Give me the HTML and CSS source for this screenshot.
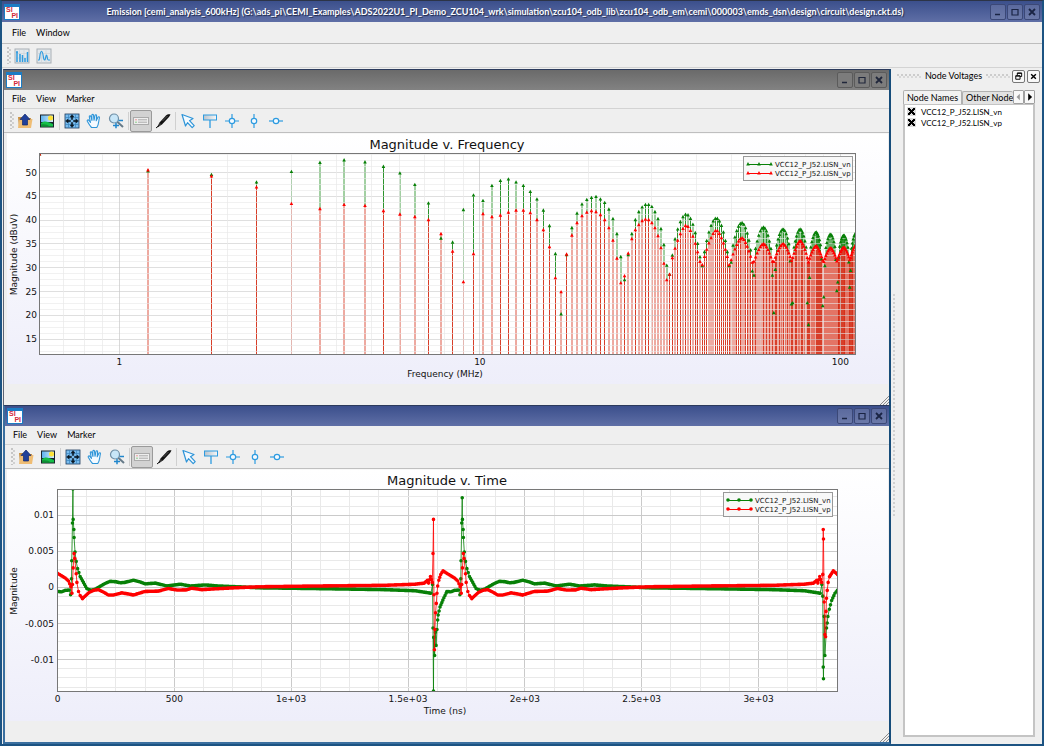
FILE: index.html
```html
<!DOCTYPE html>
<html lang="en">
<head>
<meta charset="utf-8">
<title>Emission [cemi_analysis_600kHz]</title>
<link rel="stylesheet" href="styles.css">
</head>
<body>
<svg class="defs" aria-hidden="true">
  <defs>
    <linearGradient id="g-plate" x1="0" y1="0" x2="1" y2="0"><stop offset="0" stop-color="#b9c3cc"/><stop offset="1" stop-color="#f7f7f7"/></linearGradient>
    <linearGradient id="g-sky" x1="0" y1="0" x2="1" y2="0"><stop offset="0" stop-color="#5fb2ee"/><stop offset="1" stop-color="#d8eefb"/></linearGradient>
  </defs>
  <symbol id="i-spectrum" viewBox="0 0 16 16">
    <rect x="1" y="1" width="14" height="14" fill="#e3e8ec" stroke="#a9b0b6"/>
    <path d="M1 5.500h14M1 10h14M5.500 1v14M10 1v14" stroke="#c9d0d6" stroke-width=".6"/>
    <path d="M2 4h2M3 4v10M6 6v8M8.500 7v7M11 10v4M13.500 4v10" stroke="#2d9be0" stroke-width="1.500" fill="none"/>
  </symbol>
  <symbol id="i-wave" viewBox="0 0 16 16">
    <rect x="1" y="1" width="14" height="14" fill="#e3e8ec" stroke="#a9b0b6"/>
    <path d="M1 5.500h14M1 10h14M5.500 1v14M10 1v14" stroke="#c9d0d6" stroke-width=".6"/>
    <path d="M2 12h1C4 12 3.500 3.500 5.500 3.500S7 12 8.500 12 9.500 7 10.500 7s.5 5 1.800 5H14" stroke="#2d9be0" stroke-width="1.200" fill="none"/>
  </symbol>
  <symbol id="i-open" viewBox="0 0 16 16">
    <path d="M1 4h4l1 1h8v10H2z" fill="#c9903f"/><path d="M1 15 2.500 6h13L14 15z" fill="#efbd74"/>
    <path d="M8 1 13 6.500h-2.500V12h-5V6.500H3z" fill="#20409a" stroke="#122a6e" stroke-width=".7"/>
  </symbol>
  <symbol id="i-image" viewBox="0 0 16 16">
    <rect x="1" y="1.500" width="14" height="13" fill="#19232b"/><rect x="2" y="2.500" width="12" height="6.500" fill="url(#g-sky)"/>
    <circle cx="11.500" cy="5" r="2.500" fill="#ffe338"/><path d="M2 10c3-2.500 6-2 12 1v2.500H2z" fill="#15bf48"/><path d="M2 11.500c4-.500 6 0 9 2H2z" fill="#0e8f34"/>
  </symbol>
  <symbol id="i-fit" viewBox="0 0 16 16">
    <rect x="1" y="1" width="14" height="14" fill="#79bdf0" stroke="#1d3a5c" stroke-width=".8"/>
    <path d="M1 4.500h14M1 11.500h14M4.500 1v14M11.500 1v14" stroke="#3b82ba" stroke-width=".7"/>
    <path d="M8 1.500 10 4H8.700v2.500H7.300V4H6zM8 14.500 6 12H7.300V9.500h1.400V12H10zM1.500 8 4 6v1.300h2.500v1.400H4V10zM14.500 8 12 10V8.700H9.500V7.300H12V6z" fill="#0b1722" stroke="#0b1722" stroke-width=".4"/>
  </symbol>
  <symbol id="i-hand" viewBox="0 0 16 16">
    <path d="M5.500 14.500C3.500 12.500 2.500 10.500 1.300 8.300c-.500-1.300.900-1.800 1.600-.900L4.500 9.300 3.300 4c-.200-1.300 1.300-1.500 1.600-.300L6 7.500 5.800 2.300c0-1.300 1.600-1.300 1.700 0L8 7.300l1-4.800c.300-1.200 1.800-.900 1.600.300L10.200 7.800l1.700-3.500c.600-1.100 1.900-.500 1.500.600C12.500 8 13 11.500 10.800 14.500z" fill="#f4faff" stroke="#2d94d8" stroke-width="1.100" stroke-linejoin="round"/>
  </symbol>
  <symbol id="i-zoom" viewBox="0 0 16 16">
    <path d="m9 8.500 6 5.500" stroke="#667a88" stroke-width="2"/><circle cx="6" cy="5.500" r="4.500" fill="#c8e6f8" stroke="#6f8fa6" stroke-width="1.200"/>
    <path d="M10.500 7.500H15M5 12.500h6M8 9.800v5.500" stroke="#2186cc" stroke-width="1.500"/>
  </symbol>
  <symbol id="i-legend" viewBox="0 0 16 16">
    <rect x=".5" y="4.500" width="15" height="7" fill="#eee" stroke="#aaa"/><path d="M5 6.800h9M5 9.200h9" stroke="#aaa"/><path d="M2 6.800h2" stroke="#e99"/><path d="M2 9.200h2" stroke="#8c8"/>
  </symbol>
  <symbol id="i-pen" viewBox="0 0 16 16">
    <path d="M4.500 9.500 11 2.500c1-1 3-1.500 4.500-1L14 4l-7 7.500-2 1z" fill="#111"/><path d="m4.500 9.500 2 2L3.500 14 2 14.300z" fill="#333"/><path d="m1 15 3-2.500" stroke="#111"/><path d="m7.500 8 5-5" stroke="#999" stroke-width=".5"/>
  </symbol>
  <symbol id="i-cursor" viewBox="0 0 16 16">
    <path d="m2 1.500 11 4-3.500 2.200 4.700 5-2 2-4.700-5L5.500 13z" fill="#f4faff" stroke="#2d94d8" stroke-width="1.200" stroke-linejoin="round"/>
  </symbol>
  <symbol id="i-flag" viewBox="0 0 16 16">
    <path d="M8 7v8" stroke="#2d9be0" stroke-width="1.300"/><rect x="1.500" y="2" width="13" height="5" fill="url(#g-plate)" stroke="#2d9be0"/>
  </symbol>
  <symbol id="i-cross" viewBox="0 0 16 16">
    <path d="M1 8h14M8 1v14" stroke="#2d9be0" stroke-width="1.200"/><circle cx="8" cy="8" r="2.700" fill="#f4faff" stroke="#2d9be0" stroke-width="1.200"/>
  </symbol>
  <symbol id="i-vert" viewBox="0 0 16 16">
    <path d="M8 1v14" stroke="#2d9be0" stroke-width="1.200"/><circle cx="8" cy="8" r="2.700" fill="#f4faff" stroke="#2d9be0" stroke-width="1.200"/>
  </symbol>
  <symbol id="i-horz" viewBox="0 0 16 16">
    <path d="M1 8h14" stroke="#2d9be0" stroke-width="1.200"/><circle cx="8" cy="8" r="2.700" fill="#f4faff" stroke="#2d9be0" stroke-width="1.200"/>
  </symbol>
  <symbol id="i-min" viewBox="0 0 14 14"><path d="M4 9.500h5" stroke="currentColor" stroke-width="1.500"/></symbol>
  <symbol id="i-max" viewBox="0 0 14 14"><path d="M4 4.500h6v5.500H4z" fill="none" stroke="currentColor" stroke-width="1.200"/></symbol>
  <symbol id="i-close" viewBox="0 0 14 14"><path d="m4 4 6 6m0-6-6 6" stroke="currentColor" stroke-width="1.800"/></symbol>
  <symbol id="i-float" viewBox="0 0 14 14"><path d="M5.500 5.500v-3H11V7H9M3.500 6H9v4.500H3.500zM3.500 6.500H9M5.500 3H11" fill="none" stroke="currentColor" stroke-width="1.200"/></symbol>
  <symbol id="i-prev" viewBox="0 0 14 14"><path d="M9 2v10L4 7z" fill="currentColor"/></symbol>
  <symbol id="i-next" viewBox="0 0 14 14"><path d="M5 1v12l6-6z" fill="currentColor"/></symbol>
</svg>

<div class="app">
  <header class="titlebar">
    <span class="logo"><b>SI</b><b>PI</b></span>
    <h1 class="caption">Emission [cemi_analysis_600kHz] (G:\ads_pi\CEMI_Examples\ADS2022U1_PI_Demo_ZCU104_wrk\simulation\zcu104_odb_lib\zcu104_odb_em\cemi\000003\emds_dsn\design\circuit\design.ckt.ds)</h1>
    <div class="winbtns">
      <button aria-label="Minimize"><svg><use href="#i-min"/></svg></button>
      <button aria-label="Maximize"><svg><use href="#i-max"/></svg></button>
      <button aria-label="Close"><svg><use href="#i-close"/></svg></button>
    </div>
  </header>
  <nav class="menubar main-menu"><button>File</button><button>Window</button></nav>
  <div class="toolbar main-tools">
    <i class="grip"></i>
    <button class="tool" aria-label="Spectrum plot"><svg class="icon"><use href="#i-spectrum"/></svg></button>
    <button class="tool" aria-label="Waveform plot"><svg class="icon"><use href="#i-wave"/></svg></button>
  </div>

  <div class="workspace">
    <main class="mdi">
      <section class="window inactive">
        <div class="titlebar">
          <span class="logo"><b>SI</b><b>PI</b></span><span class="caption"></span>
          <div class="winbtns">
            <button aria-label="Minimize"><svg><use href="#i-min"/></svg></button>
            <button aria-label="Maximize"><svg><use href="#i-max"/></svg></button>
            <button aria-label="Close"><svg><use href="#i-close"/></svg></button>
          </div>
        </div>
        <nav class="menubar"><button>File</button><button>View</button><button>Marker</button></nav>
        <div class="toolbar">
          <i class="grip"></i>
          <button class="tool" aria-label="Export"><svg class="icon"><use href="#i-open"/></svg></button>
          <button class="tool" aria-label="Save image"><svg class="icon"><use href="#i-image"/></svg></button>
          <i class="sep"></i>
          <button class="tool" aria-label="Fit"><svg class="icon"><use href="#i-fit"/></svg></button>
          <button class="tool" aria-label="Pan"><svg class="icon"><use href="#i-hand"/></svg></button>
          <button class="tool" aria-label="Zoom"><svg class="icon"><use href="#i-zoom"/></svg></button>
          <i class="sep"></i>
          <button class="tool pressed" aria-label="Legend" aria-pressed="true"><svg class="icon"><use href="#i-legend"/></svg></button>
          <button class="tool" aria-label="Trace style"><svg class="icon"><use href="#i-pen"/></svg></button>
          <i class="sep"></i>
          <button class="tool" aria-label="Select"><svg class="icon"><use href="#i-cursor"/></svg></button>
          <button class="tool" aria-label="Marker"><svg class="icon"><use href="#i-flag"/></svg></button>
          <button class="tool" aria-label="Cross marker"><svg class="icon"><use href="#i-cross"/></svg></button>
          <button class="tool" aria-label="Vertical marker"><svg class="icon"><use href="#i-vert"/></svg></button>
          <button class="tool" aria-label="Horizontal marker"><svg class="icon"><use href="#i-horz"/></svg></button>
        </div>
        <div class="chart" id="spectrum"></div>
        <div class="statusbar"><svg class="sizer" viewBox="0 0 10 10"><path d="M1 10 10 1M4 10l6-6M7 10l3-3"/></svg></div>
      </section>

      <section class="window active">
        <div class="titlebar">
          <span class="logo"><b>SI</b><b>PI</b></span><span class="caption"></span>
          <div class="winbtns">
            <button aria-label="Minimize"><svg><use href="#i-min"/></svg></button>
            <button aria-label="Maximize"><svg><use href="#i-max"/></svg></button>
            <button aria-label="Close"><svg><use href="#i-close"/></svg></button>
          </div>
        </div>
        <nav class="menubar"><button>File</button><button>View</button><button>Marker</button></nav>
        <div class="toolbar">
          <i class="grip"></i>
          <button class="tool" aria-label="Export"><svg class="icon"><use href="#i-open"/></svg></button>
          <button class="tool" aria-label="Save image"><svg class="icon"><use href="#i-image"/></svg></button>
          <i class="sep"></i>
          <button class="tool" aria-label="Fit"><svg class="icon"><use href="#i-fit"/></svg></button>
          <button class="tool" aria-label="Pan"><svg class="icon"><use href="#i-hand"/></svg></button>
          <button class="tool" aria-label="Zoom"><svg class="icon"><use href="#i-zoom"/></svg></button>
          <i class="sep"></i>
          <button class="tool pressed" aria-label="Legend" aria-pressed="true"><svg class="icon"><use href="#i-legend"/></svg></button>
          <button class="tool" aria-label="Trace style"><svg class="icon"><use href="#i-pen"/></svg></button>
          <i class="sep"></i>
          <button class="tool" aria-label="Select"><svg class="icon"><use href="#i-cursor"/></svg></button>
          <button class="tool" aria-label="Marker"><svg class="icon"><use href="#i-flag"/></svg></button>
          <button class="tool" aria-label="Cross marker"><svg class="icon"><use href="#i-cross"/></svg></button>
          <button class="tool" aria-label="Vertical marker"><svg class="icon"><use href="#i-vert"/></svg></button>
          <button class="tool" aria-label="Horizontal marker"><svg class="icon"><use href="#i-horz"/></svg></button>
        </div>
        <div class="chart" id="waveform"></div>
        <div class="statusbar"><svg class="sizer" viewBox="0 0 10 10"><path d="M1 10 10 1M4 10l6-6M7 10l3-3"/></svg></div>
      </section>
    </main>

    <div class="splitter"><i></i></div>

    <aside class="dock">
      <div class="dock-head">
        <i class="dots"></i><h2>Node Voltages</h2><i class="dots"></i>
        <button class="mini" aria-label="Float"><svg><use href="#i-float"/></svg></button>
        <button class="mini" aria-label="Close"><svg><use href="#i-close"/></svg></button>
      </div>
      <div class="tabs" role="tablist">
        <button class="tab selected" role="tab" aria-selected="true">Node Names</button>
        <button class="tab" role="tab" aria-selected="false">Other Node</button>
        <button class="scroll" aria-label="Previous tab" disabled><svg><use href="#i-prev"/></svg></button>
        <button class="scroll" aria-label="Next tab"><svg><use href="#i-next"/></svg></button>
      </div>
      <div class="nodes">
        <label><input type="checkbox" checked>VCC12_P_J52.LISN_vn</label>
        <label><input type="checkbox" checked>VCC12_P_J52.LISN_vp</label>
      </div>
    </aside>
  </div>
</div>
<script src="charts.js"></script>
</body>
</html>
```
FILE: styles.css
```css
* { box-sizing: border-box; }
html, body { height: 100%; }
body {
  margin: 0;
  background: #efefef;
  color: #000;
  font: 9px/12px Lato, "Open Sans", sans-serif;
}
button { font: inherit; color: inherit; background: none; border: 0; padding: 0; margin: 0; }
h1, h2 { margin: 0; font: inherit; }
.defs { position: absolute; width: 0; height: 0; }
.icon { display: block; flex: none; width: 16px; height: 16px; }

.logo {
  display: flex;
  flex-direction: column;
  flex: none;
  width: 16px;
  height: 16px;
  padding: 0 1px;
  border: 1px solid #1b7cc4;
  border-top-width: 3px;
  background: #fff;
  color: #d2283c;
  font: bold 7px/6px "Liberation Sans", sans-serif;
}
.logo b:last-child { align-self: flex-end; }

.app {
  display: flex;
  flex-direction: column;
  height: 100vh;
  border: 1px solid #1c5382;
  border-width: 1px 2px 2px;
  border-top-color: #2c3447;
}

.titlebar {
  display: flex;
  align-items: center;
  flex: none;
  height: 21px;
  padding: 0 2px;
  background: linear-gradient(#3b4f8c, #5f6fa6);
}
.caption {
  flex: 1;
  min-width: 0;
  overflow: hidden;
  white-space: nowrap;
  text-align: center;
  color: #fff;
  font-weight: bold;
  text-shadow: 1px 1px 1px #1d2747;
}
.winbtns { display: flex; gap: 1px; }
.winbtns button {
  width: 16px;
  height: 16px;
  border: 1px solid #3b4877;
  border-radius: 2px;
  background: linear-gradient(#5b6a9e, #6b79a9);
  color: #1a2444;
}
.winbtns svg, .mini svg, .scroll svg { display: block; width: 100%; height: 100%; }

.menubar {
  display: flex;
  align-items: center;
  flex: none;
  gap: 10px;
  height: 19px;
  padding: 0 8px;
  border-bottom: 1px solid #d3d3d3;
}
.main-menu { height: 22px; padding: 0 10px; border-color: #bdbdbd; }
.toolbar {
  display: flex;
  align-items: center;
  flex: none;
  height: 24px;
  padding-left: 6px;
  border-bottom: 1px solid #bfbfbf;
}
.main-tools { padding-left: 5px; border-color: #d3d3d3; }
.grip {
  width: 4px;
  height: 17px;
  background: radial-gradient(circle at 1px 1px, #c5c5c5 1px, transparent 1px) 0 0 / 4px 4px,
    radial-gradient(circle at 1px 1px, #d0d0d0 1px, transparent 1px) 2px 2px / 4px 4px;
}
.tool { display: grid; place-items: center; width: 22px; height: 22px; }
.tool.pressed { border: 1px solid #9a9a9a; border-radius: 2px; background: #d2d2d2; }
.sep { width: 1px; height: 18px; margin: 0 1px; background: #d0d0d0; }

.workspace { display: flex; flex: 1; min-height: 0; }
.mdi { display: flex; flex-direction: column; flex: 1; min-width: 0; padding: 1px 0 0 1px; }
.window {
  display: flex;
  flex-direction: column;
  flex: 1 1 2px;
  min-height: 0;
  border: 1px solid #2b3a5c;
  border-right: 2px solid #164c7a;
  border-bottom: 0;
  border-left-color: #5c6474;
}
.window.active { flex-basis: 5px; border-left: 2px solid #3a6f9f; border-bottom: 2px solid #3a6f9f; }
.inactive > .titlebar { background: linear-gradient(#6a6a6a, #828282); }
.inactive .winbtns button { border-color: #5b5b5b; background: #7c7c7c; color: #20273b; }
.window > .titlebar { height: 20px; }
.chart {
  flex: 1;
  min-height: 0;
  margin: 0 1px 0 3px;
  border-top: 1px solid #f8f8f8;
  background: linear-gradient(#fff, #eeeefa);
}
.active .chart { margin-left: 2px; }
.chart svg { display: block; }
.statusbar { display: flex; justify-content: flex-end; align-items: flex-end; flex: none; height: 21px; }
.sizer { width: 10px; height: 10px; fill: none; stroke: #8b8b8b; }

.chart text { font-family: "DejaVu Sans", sans-serif; font-size: 9px; fill: #111; }
.chart .chart-title { font-size: 13px; }
.chart .legend-text { font-size: 7px; }
.plot-bg { fill: #fff; }
.frame { fill: none; stroke: #777; }
.minor { stroke: #e9e9e9; fill: none; }
.major { stroke: #cacaca; fill: none; }
.legend-box { fill: #f8f8f8; stroke: #999; }
.vn { stroke: #078007; fill: none; }
.vp { stroke: #f00; fill: none; }
.stem.vp { stroke: #d01c04; }
.vn-mark { fill: #078007; }
.vp-mark { fill: #f00; }

.splitter { display: flex; align-items: center; flex: none; width: 6px; padding-left: 2px; }
.splitter i {
  width: 2px;
  height: 224px;
  background: repeating-linear-gradient(#d0d0d0 0 2px, transparent 2px 4px);
}
.dock { display: flex; flex-direction: column; flex: none; width: 145px; }
.dock-head { display: flex; align-items: center; flex: none; gap: 2px; height: 16px; padding-right: 2px; }
.dots {
  flex: 1;
  height: 4px;
  background: radial-gradient(circle at 1px 1px, #ccc 1px, transparent 1px) 0 0 / 4px 4px,
    radial-gradient(circle at 1px 1px, #d8d8d8 1px, transparent 1px) 2px 2px / 4px 4px;
}
.dock-head h2 { padding: 0 2px; }
.mini { width: 13px; height: 13px; border: 1px solid #777; border-radius: 2px; background: #f8f8f8; }
.tabs { display: flex; align-items: flex-end; flex: none; height: 20px; margin: 0 7px 0 6px; }
.tab {
  flex: none;
  height: 14px;
  width: 59px;
  border: 1px solid #b0b0b0;
  border-bottom: 0;
  border-radius: 2px 2px 0 0;
  background: #e2e2e2;
  white-space: nowrap;
  overflow: hidden;
}
.tab:not(.selected) { flex: 1; height: 13px; width: auto; min-width: 0; padding-left: 3px; border-right: 0; }
.tab.selected { background: #f2f2f2; }
.scroll { width: 11px; height: 14px; border: 1px solid #a0a0a0; border-radius: 1px; background: #f8f8f8; }
.scroll:disabled { color: #999; }
.nodes {
  flex: 1;
  margin: 0 7px 7px 6px;
  padding: 1px 2px;
  border: 2px solid #c4c4c4;
  border-top-width: 1px;
  background: #fff;
}
.nodes label { display: flex; align-items: center; gap: 5px; height: 11px; font-size: 8px; }
.nodes input {
  appearance: none;
  width: 9px;
  height: 9px;
  margin: 0;
  border: 1px solid #ddd;
  background: #ddd;
}
.nodes input:checked {
  background: linear-gradient(45deg, transparent 38%, #000 38% 62%, transparent 62%),
    linear-gradient(-45deg, #ddd 38%, #000 38% 62%, #ddd 62%);
}
```
FILE: charts.js
```js
const NS = 'http://www.w3.org/2000/svg';

function add(parent, name, attrs, text) {
  const node = document.createElementNS(NS, name);
  for (const key in attrs) node.setAttribute(key, attrs[key]);
  if (text !== undefined) node.textContent = text;
  parent.appendChild(node);
  return node;
}

/* Spectrum: harmonics of 600 kHz, levels in dBuV, [vn, vp]. */
const F0 = 0.6;
const level = y => 50 - (y - 172.5) / 4.75;
const firstHarmonics = [
  [154, 154], [171, 170], [174.5, 176], [182, 187], [171.5, 203.5], [162.5, 208.5], [160, 204.5], [162, 205.5],
  [166.5, 210.5], [173, 214], [184.5, 216.5], [203, 219.5], [238, 233.5], [242, 251], [209.5, 281.5],
  [195, 253.5], [200.5, 213.5], [185.5, 216.5], [180.5, 215], [179, 212], [182, 210], [185.5, 210],
  [191.5, 212.5], [199, 219.5], [210, 229.5], [225.5, 246.5], [253.5, 277.5], [313.5, 291.5], [254.5, 254],
  [227.5, 235], [213, 222.5], [204, 215.5], [199.5, 212], [197.5, 210.5], [196.5, 211.5], [199, 214.5],
  [202.5, 219.5], [209, 227.5], [218.5, 240], [233.5, 258], [256.5, 282.5], [279.5, 275.5], [254.5, 253],
  [233.5, 238.5], [219.5, 229.5], [211.5, 224.5], [207, 220.5], [204.5, 219], [204.5, 219.5], [206.5, 222.5],
  [211.5, 227.5], [218.5, 235.5], [228.5, 247.5], [244.5, 263], [265, 279.5], [274, 274], [255, 257.5]
];
/* Later lobes: peak harmonic, vn peak, vp peak, vp trough, vn null depth. */
const lobes = [
  [62.3, 214, 225, 273, 274], [75.5, 218, 230, 267, 270], [88.8, 222.5, 237.5, 266, 284],
  [102, 227, 243.5, 265, 299], [115.6, 229, 243.5, 262, 321], [129, 229, 240.5, 261, 352],
  [142.7, 232, 245.5, 262, 329], [156.6, 234, 247.5, 262, 303], [170.4, 235, 247, 260, 292], [184, 233, 245, 260, 290]
];
function spectrumData() {
  const out = firstHarmonics.map(([a, b], i) => [F0 * (i + 1), level(a), level(b)]);
  for (let k = 58; k <= 183; k++) {
    const lobe = lobes.reduce((best, l) => Math.abs(l[0] - k) < Math.abs(best[0] - k) ? l : best);
    const u = Math.min(1, Math.abs(lobe[0] - k) / 6.8);
    const vp = lobe[2] + (lobe[3] - lobe[2]) * Math.pow(u, 1.6);
    let vn = lobe[1] + (lobe[3] - lobe[1]) * Math.pow(u, 1.9);
    if (u > 0.75) vn += (lobe[4] - lobe[3]) * (u - 0.75) / 0.25;
    out.push([F0 * k, level(vn), level(vp)]);
  }
  return out;
}

/* Waveform: one switching cycle, [ns, mV]. */
const vnCycle = [
  [0, -.55], [18, -.6], [33, -.4], [50, -.35], [56, -1], [60, 1.2], [61, 3.7], [64, 8.9], [66, 13.6], [67, 9.4],
  [70, 8], [71, 6.9], [75, 4.9], [80, 3.6], [86, 2.6], [97, 1.5], [111, .7], [125, -.15], [143, -.4], [161, -.25],
  [182, .15], [204, .55], [225, .85], [247, .8], [268, .65], [289, .7], [325, 1], [354, .75], [375, .5],
  [418, .6], [468, .2], [525, .45], [568, .2], [632, .35], [689, .2], [767, .1], [867, -.05], [1100, -.15],
  [1400, -.3], [1530, -.45], [1580, -.7], [1598, -.8], [1605, .4]
];
const vpCycle = [
  [0, 1.95], [18, 1.6], [33, 1.3], [47, .9], [57, .1], [62, -.8], [64, .4], [67, 2.7], [71, 4.7], [74, 4],
  [80, 1.9], [83, .7], [90, -.55], [97, -1.1], [107, -1.55], [121, -1.1], [135, -.7], [154, -.4], [175, -.3],
  [200, -.7], [218, -1.05], [240, -1.05], [275, -.75], [304, -.9], [325, -1.05], [375, -.55], [432, -.5],
  [475, -.15], [510, -.35], [553, -.33], [575, -.1], [617, -.3], [667, -.2], [753, -.05], [867, .1],
  [1100, .2], [1400, .3], [1530, .45], [1570, .6], [1583, 1], [1588, .6], [1596, 1.5], [1604, .7]
];
const vnEvents = [
  [[1607, -5.6], [1609, -14.3], [1610, -6.9], [1614, -9.4], [1617, -6.2], [1620, -8], [1624, -5.8], [1627, -4.5], [1629, -3.8],
   [1637, -2.7], [1649, -1.75], [1663, -.8]],
  [[3275, -1.2], [3277, -11], [3278, -12.6], [3281, -4], [3284, -9.4], [3291, -5.6], [3294, -4.9], [3297, -4],
   [3303, -3], [3313, -1.8], [3327, -.8], [3338, -.4]]
];
const vpEvents = [
  [[1607, 4.7], [1609, 9.4], [1611, -1], [1613, -8.6], [1615, -5.8], [1618, -3.5], [1621, -2.2], [1624, -.8],
   [1627, .2], [1632, 1], [1640, 1.8], [1650, 2.3]],
  [[3275, 1.8], [3277, 8], [3278, 6.7], [3281, -2], [3284, -6.5], [3287, -6.8], [3289, -3.3], [3291, -1.5], [3294, -.4],
   [3298, .7], [3304, 1.5], [3320, 2.3], [3338, 1.8]]
];
function waveform(cycle, events) {
  const second = cycle.map(([t, v]) => [t + 1666, Math.min(v, 12.4)]);
  return cycle.concat(events[0], second, events[1]);
}
function samples(knots) {
  const out = [];
  knots.forEach(([t, v], i) => {
    out.push([t, v]);
    const next = knots[i + 1];
    if (!next) return;
    const slope = Math.abs((next[1] - v) / (next[0] - t));
    if (slope > 0.35) return;
    const n = Math.floor((next[0] - t) / 4);
    for (let j = 1; j < n; j++) out.push([t + (next[0] - t) * j / n, v + (next[1] - v) * j / n]);
  });
  return out;
}

function frame(host, margin, title, xLabel, yLabel) {
  host.replaceChildren();
  const w = host.clientWidth, h = host.clientHeight;
  const svg = add(host, 'svg', { width: w, height: h, role: 'img', 'aria-label': title });
  const box = { l: margin.l, t: margin.t, r: w - margin.r, b: h - margin.b };
  const cx = (box.l + box.r) / 2, cy = (box.t + box.b) / 2;
  const clip = add(add(svg, 'defs', {}), 'clipPath', { id: host.id + '-clip' });
  const area = { x: box.l, y: box.t, width: box.r - box.l, height: box.b - box.t };
  add(clip, 'rect', area);
  add(svg, 'rect', { ...area, class: 'plot-bg' });
  add(svg, 'text', { x: cx, y: 15, 'text-anchor': 'middle', class: 'chart-title' }, title);
  add(svg, 'text', { x: cx - 2, y: box.b + 23, 'text-anchor': 'middle' }, xLabel);
  add(svg, 'text', { transform: `translate(10 ${cy + 1}) rotate(-90)`, 'text-anchor': 'middle' }, yLabel);
  return { svg, box, area: { ...area, x: area.x + .5, y: area.y + .5 }, clip: `url(#${host.id}-clip)` };
}
function crisp(v) { return Math.floor(v) + 0.5; }
function gridLine(g, box, axis, pos, cls) {
  const p = crisp(pos);
  add(g, 'path', { d: axis === 'x' ? `M${p} ${box.t}V${box.b}` : `M${box.l} ${p}H${box.r}`, class: cls });
}
function triangle(x, y) { return `M${x - 1.8} ${y + 1.5}h3.6l-1.8 -3.4z`; }
function dot(x, y) { return `M${x - 1.8} ${y}a1.8 1.8 0 1 0 3.6 0a1.8 1.8 0 1 0 -3.6 0z`; }
function legend(svg, box, inset, mark) {
  const x = box.r - inset - 109, y = box.t + 3;
  add(svg, 'rect', { x: x + .5, y: y + .5, width: 109, height: 24, class: 'legend-box' });
  ['vn', 'vp'].forEach((name, i) => {
    const ly = y + 8 + i * 9;
    add(svg, 'path', { d: `M${x + 5} ${ly + .5}h23`, class: name });
    add(svg, 'path', { d: mark(x + 5, ly) + mark(x + 16, ly) + mark(x + 28, ly), class: name + '-mark' });
    add(svg, 'text', { x: x + 32, y: ly + 3, class: 'legend-text' }, 'VCC12_P_J52.LISN_' + name);
  });
}

function drawSpectrum() {
  const f = frame(document.getElementById('spectrum'), { l: 32, r: 33, t: 19, b: 30 },
    'Magnitude v. Frequency', 'Frequency (MHz)', 'Magnitude (dBuV)');
  const { svg, box } = f;
  const lo = Math.log10(0.6), hi = Math.log10(110.2);
  const X = v => box.l + .5 + (Math.log10(v) - lo) / (hi - lo) * (box.r - box.l);
  const Y = v => box.b - (v - 11.9) / (54.1 - 11.9) * (box.b - box.t);
  const data = spectrumData();
  const stems = add(svg, 'g', { 'clip-path': f.clip });
  /* A stem that straddles two pixel columns is drawn wide and faint, otherwise it fills one column. */
  const straddles = x => Math.abs(x - crisp(x)) > .25;
  const snap = x => straddles(x) ? Math.round(x) : crisp(x);
  [false, true].forEach(faint => {
    const group = data.filter(p => straddles(X(p[0])) === faint);
    const opacity = faint ? .75 : .85;
    add(stems, 'path', {
      d: group.filter(p => p[1] > p[2]).map(p => `M${snap(X(p[0]))} ${Y(p[1])}V${Y(p[2])}`).join(''),
      class: 'stem vn', opacity
    });
    add(stems, 'path', {
      d: group.map(p => `M${snap(X(p[0]))} ${Y(p[2])}V${box.b}`).join(''), class: 'stem vp', opacity
    });
  });
  const grid = add(svg, 'g', { opacity: .6 });
  for (let v = 12.5; v < 54; v += 1.25) gridLine(grid, box, 'y', Y(v), v % 5 ? 'minor' : 'major');
  const vgrid = add(svg, 'g', { opacity: .7 });
  [.7, .8, .9, 1, 2, 3, 4, 5, 6, 7, 8, 9, 10, 20, 30, 40, 50, 60, 70, 80, 90, 100].forEach(v =>
    gridLine(vgrid, box, 'x', X(v), v === 1 || v === 10 || v === 100 ? 'major' : 'minor'));
  for (let v = 15; v <= 50; v += 5) add(svg, 'text', { x: box.l - 2, y: Y(v) + 3, 'text-anchor': 'end' }, v);
  [1, 10, 100].forEach(v => add(svg, 'text', { x: X(v), y: box.b + 11, 'text-anchor': 'middle' }, v));
  const marks = add(svg, 'g', { 'clip-path': f.clip });
  add(marks, 'path', { d: data.map(p => triangle(X(p[0]), Y(p[1]))).join(''), class: 'vn-mark' });
  add(marks, 'path', { d: data.map(p => triangle(X(p[0]), Y(p[2]))).join(''), class: 'vp-mark' });
  add(svg, 'rect', { ...f.area, class: 'frame' });
  legend(svg, box, 3, triangle);
}

function drawWaveform() {
  const f = frame(document.getElementById('waveform'), { l: 50, r: 51, t: 19, b: 30 },
    'Magnitude v. Time', 'Time (ns)', 'Magnitude');
  const { svg, box } = f;
  const X = v => box.l + .5 + v / 3338 * (box.r - box.l);
  const Y = v => box.b - (v + 14.3) / 27.9 * (box.b - box.t);
  for (let v = 125; v < 3330; v += 125) gridLine(svg, box, 'x', X(v), v % 500 ? 'minor' : 'major');
  for (let v = -13.75; v < 13.6; v += 1.25) gridLine(svg, box, 'y', Y(v), v % 5 ? 'minor' : 'major');
  [[-10, '-0.01'], [-5, '-0.005'], [0, '0'], [5, '0.005'], [10, '0.01']].forEach(([v, label]) =>
    add(svg, 'text', { x: box.l - 3, y: Y(v) + 3, 'text-anchor': 'end' }, label));
  [[0, '0'], [500, '500'], [1000, '1e+03'], [1500, '1.5e+03'], [2000, '2e+03'], [2500, '2.5e+03'], [3000, '3e+03']]
    .forEach(([v, label]) => add(svg, 'text', { x: X(v), y: box.b + 11, 'text-anchor': 'middle' }, label));
  const traces = add(svg, 'g', { 'clip-path': f.clip });
  [['vn', waveform(vnCycle, vnEvents)], ['vp', waveform(vpCycle, vpEvents)]].forEach(([name, knots]) => {
    add(traces, 'polyline', { points: knots.map(p => X(p[0]) + ',' + Y(p[1])).join(' '), class: name, opacity: .8 });
    add(traces, 'path', { d: samples(knots).map(p => dot(X(p[0]), Y(p[1]))).join(''), class: name + '-mark' });
  });
  add(svg, 'rect', { ...f.area, class: 'frame' });
  legend(svg, box, 5, dot);
}

function draw() { drawSpectrum(); drawWaveform(); }
draw();
window.addEventListener('resize', draw);
```
